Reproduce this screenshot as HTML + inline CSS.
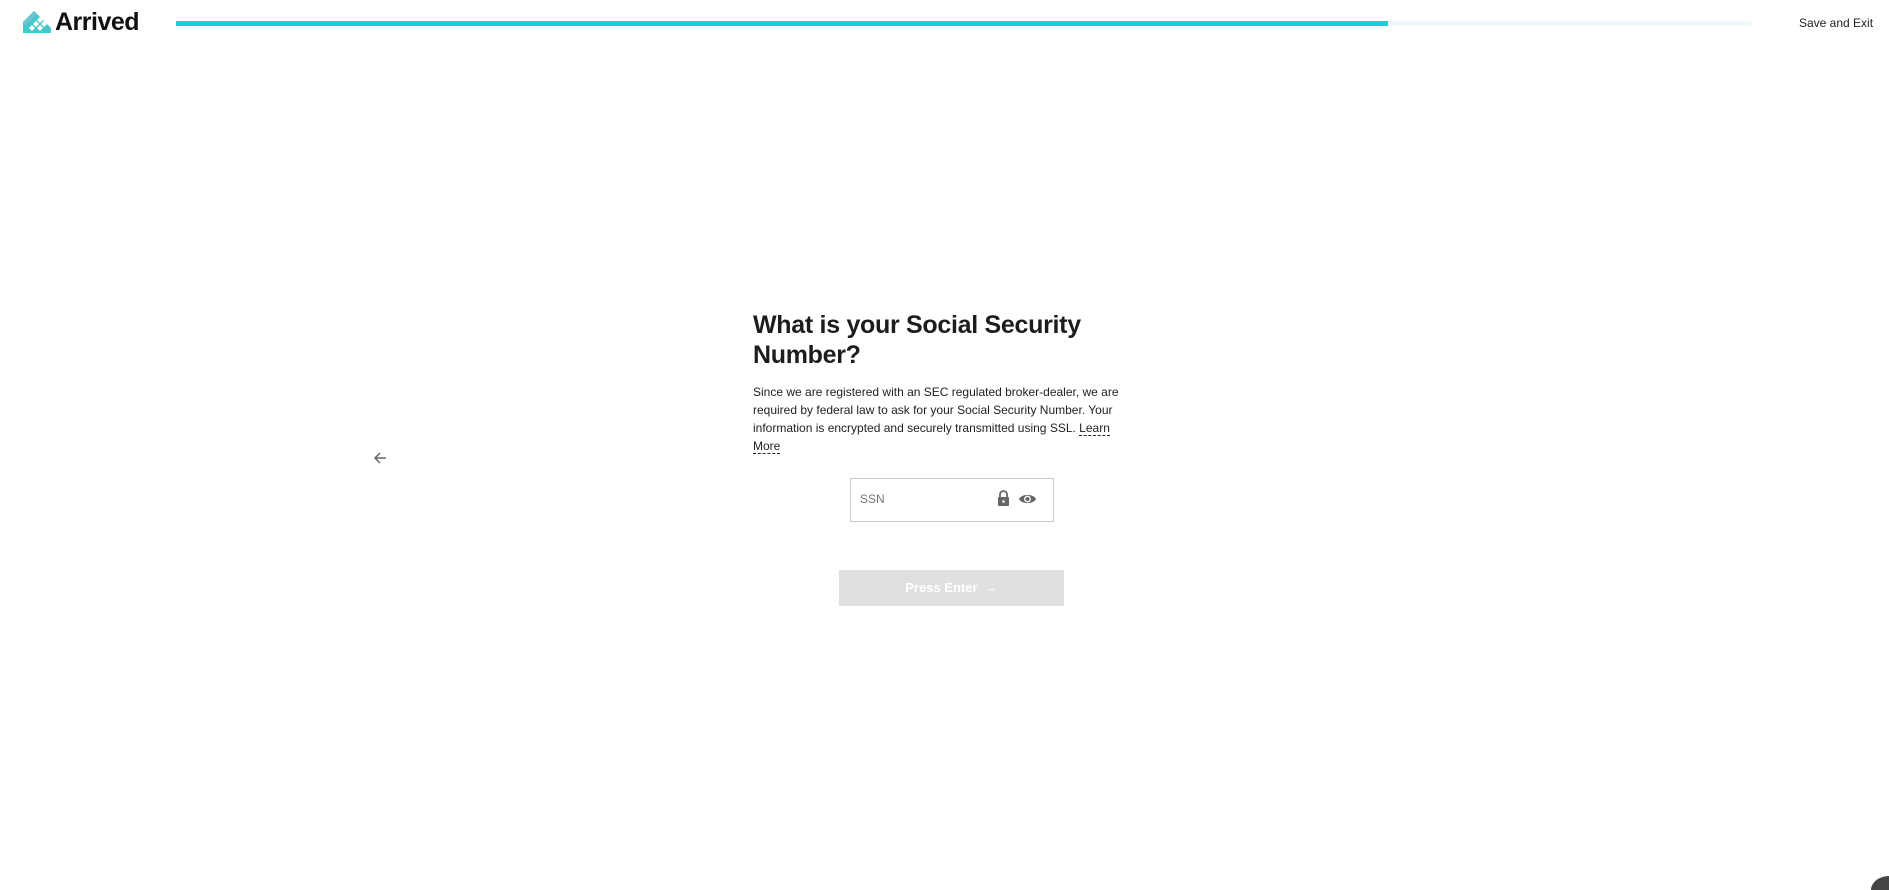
<!DOCTYPE html>
<html><head><meta charset="utf-8"><style>
html,body{margin:0;padding:0;background:#fff;width:1889px;height:890px;overflow:hidden;position:relative;font-family:"Liberation Sans",sans-serif;color:#1d1d1d}
.abs{position:absolute}
</style></head><body>
<svg class="abs" style="left:23px;top:10px" width="28" height="24" viewBox="0 0 28 24">
<polygon points="0,12 11,1 28,18 28,23 0,23" fill="#44c9cb"/>
<polygon points="0,12 11,1 14,4 3,15 0,15" fill="#6cc3d3"/>
<polygon points="14,10 17,7 20,10 17,13" fill="#fff"/>
<polygon points="10,14 13,11 16,14 13,17" fill="#fff"/>
<polygon points="18,14 21,11 24,14 21,17" fill="#fff"/>
<polygon points="14,18 17,15 20,18 17,21" fill="#fff"/>
<polygon points="6,18 9,15 12,18 9,21" fill="#fff"/>
</svg>
<div class="abs" style="left:55px;top:8px;font-size:25px;font-weight:bold;color:#111;letter-spacing:-0.5px">Arrived</div>
<div class="abs" style="left:176px;top:21px;width:1575px;height:5px;background:#f0f8fc"></div>
<div class="abs" style="left:176px;top:21px;width:1212px;height:5px;background:#17cfd8"></div>
<div class="abs" style="left:1799px;top:16px;font-size:12px;color:#222">Save and Exit</div>
<svg class="abs" style="left:372px;top:450px" width="16" height="16" viewBox="0 0 16 16"><path d="M14 8H3M8 3L3 8l5 5" stroke="#666" stroke-width="1.5" fill="none"/></svg>
<div class="abs" style="left:753px;top:310px;width:360px;font-size:25px;font-weight:bold;line-height:30px;letter-spacing:-0.3px;color:#1d1d1d">What is your Social Security Number?</div>
<div class="abs" style="left:753px;top:383px;width:375px;font-size:12px;line-height:18px;color:#222">Since we are registered with an SEC regulated broker-dealer, we are required by federal law to ask for your Social Security Number. Your information is encrypted and securely transmitted using SSL. <span style="border-bottom:1px dashed #222">Learn More</span></div>
<div class="abs" style="left:850px;top:478px;width:202px;height:42px;border:1px solid #c8c8c8"></div>
<div class="abs" style="left:860px;top:492px;font-size:12px;color:#777">SSN</div>
<svg class="abs" style="left:996px;top:490px" width="15" height="16" viewBox="0 0 15 16"><path d="M4 7V4.5a3.5 3.5 0 0 1 7 0V7" stroke="#666" stroke-width="1.8" fill="none"/><rect x="2" y="7" width="11" height="9" rx="1" fill="#666"/><circle cx="7.5" cy="11.5" r="1.3" fill="#fff"/></svg>
<svg class="abs" style="left:1018px;top:492px" width="19" height="14" viewBox="0 0 19 14"><path d="M1 7C3.5 1.5 15.5 1.5 18 7C15.5 12.5 3.5 12.5 1 7Z" fill="#666"/><circle cx="9.5" cy="7" r="3.4" fill="#fff"/><circle cx="9.5" cy="7" r="2" fill="#666"/></svg>
<div class="abs" style="left:839px;top:570px;width:225px;height:36px;background:#e0e0e0;color:#fff;font-weight:bold;font-size:13px;line-height:36px;text-align:center">Press Enter &nbsp;→</div>
<div class="abs" style="left:1871px;top:876px;width:18px;height:14px;border-top-left-radius:18px 14px;background:#444"></div>
</body></html>
